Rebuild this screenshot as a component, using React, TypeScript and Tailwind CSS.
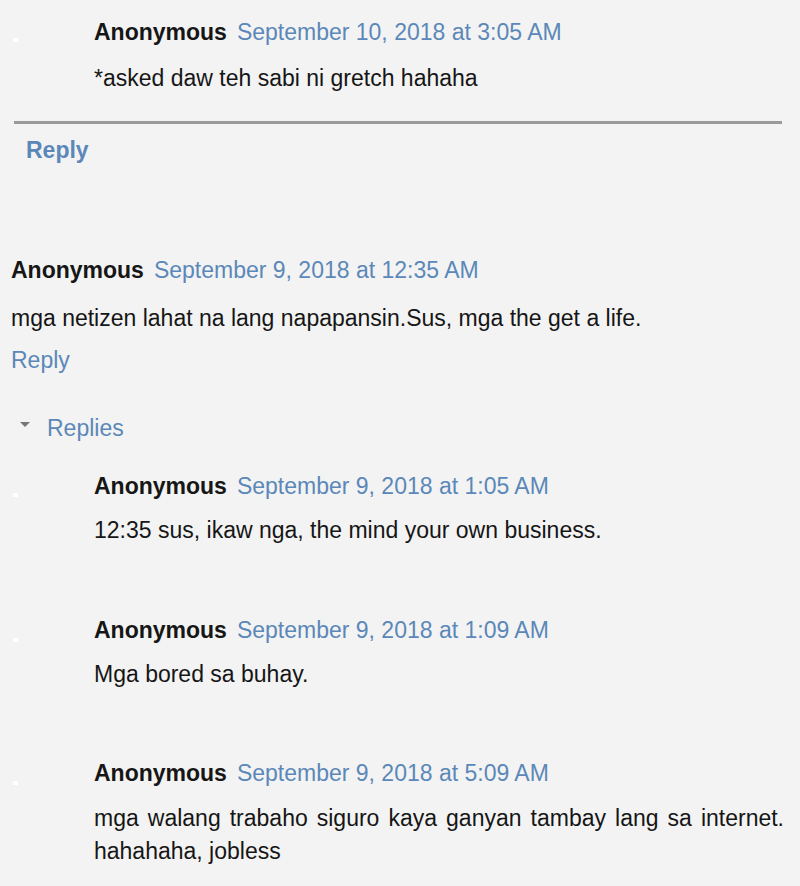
import React from "react";

const font = { fontFamily: '"Liberation Sans", Arial, sans-serif' };

function Header({ date }: { date: string }) {
  return (
    <div className="h-[28px] leading-[28px] whitespace-nowrap">
      <span className="font-bold text-[#161616]">Anonymous</span>
      <span className="ml-[10px] text-[#5b88b8]">{date}</span>
    </div>
  );
}

export default function App() {
  return (
    <div
      className="w-[800px] h-[886px] overflow-hidden bg-[#f3f3f3] text-[23px] text-[#161616]"
      style={font}
    >
      {/* First reply block */}
      <div className="relative pl-[94px] pt-[18px]">
        <span className="absolute left-[13px] top-[38px] w-[5px] h-[4px] bg-white" />
        <Header date="September 10, 2018 at 3:05 AM" />
        <div className="mt-[16px] leading-[33px]">*asked daw teh sabi ni gretch hahaha</div>
      </div>
      <div className="mt-[26px] ml-[14px] mr-[18px] h-[3px] bg-[#9a9a9a]" />
      <div className="mt-[12px] pl-[26px] h-[28px] leading-[28px] font-bold text-[#5b88b8]">Reply</div>

      {/* Second comment */}
      <div className="mt-[92px] pl-[11px]">
        <Header date="September 9, 2018 at 12:35 AM" />
        <div className="mt-[18px] leading-[33px]">
          mga netizen lahat na lang napapansin.Sus, mga the get a life.
        </div>
        <div className="mt-[11px] h-[28px] leading-[28px] text-[#5b88b8]">Reply</div>
      </div>

      <div className="mt-[40px] pl-[20px] h-[28px] flex items-center">
        <span className="w-0 h-0 border-l-[5px] border-r-[5px] border-t-[5px] border-l-transparent border-r-transparent border-t-[#777777] mb-[8px]" />
        <span className="ml-[17px] leading-[28px] text-[#5b88b8]">Replies</span>
      </div>

      <div className="relative mt-[30px] pl-[94px]">
        <span className="absolute left-[13px] top-[21px] w-[5px] h-[4px] bg-white" />
        <Header date="September 9, 2018 at 1:05 AM" />
        <div className="mt-[14px] leading-[33px]">12:35 sus, ikaw nga, the mind your own business.</div>
      </div>

      <div className="relative mt-[69px] pl-[94px]">
        <span className="absolute left-[13px] top-[22px] w-[5px] h-[4px] bg-white" />
        <Header date="September 9, 2018 at 1:09 AM" />
        <div className="mt-[14px] leading-[33px]">Mga bored sa buhay.</div>
      </div>

      <div className="relative mt-[68px] pl-[94px] pr-[16px]">
        <span className="absolute left-[13px] top-[22px] w-[5px] h-[4px] bg-white" />
        <Header date="September 9, 2018 at 5:09 AM" />
        <div className="mt-[15px] leading-[33px] text-justify">
          mga walang trabaho siguro kaya ganyan tambay lang sa internet. hahahaha, jobless
        </div>
      </div>
    </div>
  );
}
